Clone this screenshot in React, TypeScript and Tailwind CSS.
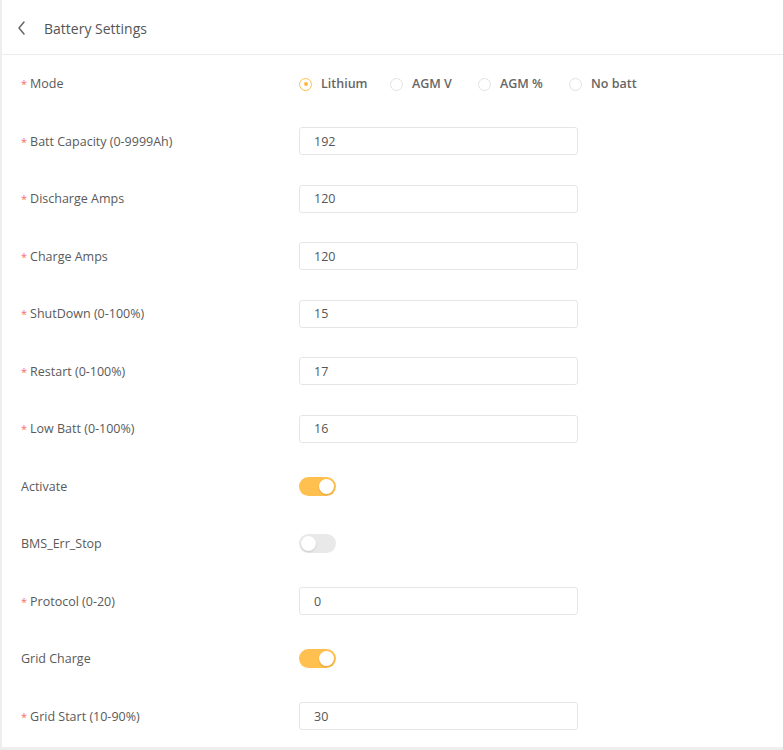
import { useState } from "react";

type Row =
  | { kind: "mode"; label: string; required: boolean }
  | { kind: "input"; label: string; required: boolean; value: string }
  | { kind: "switch"; label: string; required: boolean; on: boolean };

const ROWS: Row[] = [
  { kind: "mode", label: "Mode", required: true },
  { kind: "input", label: "Batt Capacity (0-9999Ah)", required: true, value: "192" },
  { kind: "input", label: "Discharge Amps", required: true, value: "120" },
  { kind: "input", label: "Charge Amps", required: true, value: "120" },
  { kind: "input", label: "ShutDown (0-100%)", required: true, value: "15" },
  { kind: "input", label: "Restart (0-100%)", required: true, value: "17" },
  { kind: "input", label: "Low Batt (0-100%)", required: true, value: "16" },
  { kind: "switch", label: "Activate", required: false, on: true },
  { kind: "switch", label: "BMS_Err_Stop", required: false, on: false },
  { kind: "input", label: "Protocol (0-20)", required: true, value: "0" },
  { kind: "switch", label: "Grid Charge", required: false, on: true },
  { kind: "input", label: "Grid Start (10-90%)", required: true, value: "30" },
];

const MODES = [
  { key: "lithium", label: "Lithium", w: "w-[91px]" },
  { key: "agmv", label: "AGM V", w: "w-[88px]" },
  { key: "agmp", label: "AGM %", w: "w-[91px]" },
  { key: "none", label: "No batt", w: "" },
];

function Toggle({ initial }: { initial: boolean }) {
  const [on, setOn] = useState(initial);
  return (
    <button
      onClick={() => setOn(!on)}
      className={`flex h-[19px] w-[37px] items-center rounded-full p-[2px] ${
        on ? "justify-end bg-[#ffc04f]" : "justify-start bg-[#e9e9e9]"
      }`}
    >
      <span className="h-[15px] w-[15px] rounded-full bg-white shadow-[0_1px_2px_rgba(0,0,0,0.15)]" />
    </button>
  );
}

export default function App() {
  const [mode, setMode] = useState("lithium");

  return (
    <div
      className="min-h-[750px] bg-[#eeeeee] pl-[2px]"
      style={{ fontFamily: '"Open Sans", "Noto Sans", Arial, sans-serif' }}
    >
      <div className="bg-white pb-[2px]">
        {/* Header */}
        <div className="flex h-[55px] items-center border-b border-[#ececec] pl-[14px] pt-[2px]">
          <svg width="12" height="16" viewBox="0 0 12 16" className="text-[#666]">
            <path d="M8 2 L3 8 L8 14" fill="none" stroke="currentColor" strokeWidth="1.5" strokeLinecap="round" strokeLinejoin="round" />
          </svg>
          <span className="ml-[16px] text-[14px] text-[#555]">Battery Settings</span>
        </div>

        {/* Form */}
        <div>
          {ROWS.map((row) => (
            <div key={row.label} className="flex h-[57.5px] items-center">
              <div className="w-[297px] pl-[19px] pt-[2px] text-[12.5px] text-[#5a5a5a]">
                {row.required && <span className="mr-[3px] text-[11px] text-[#f56c6c]">*</span>}
                {row.label}
              </div>
              {row.kind === "mode" && (
                <div className="flex items-center pt-[1px]">
                  {MODES.map((m) => {
                    const active = mode === m.key;
                    return (
                      <label
                        key={m.key}
                        onClick={() => setMode(m.key)}
                        className={`flex cursor-pointer items-center ${m.w}`}
                      >
                        <span
                          className={`flex h-[13px] w-[13px] items-center justify-center rounded-full border ${
                            active ? "border-[#ffc04f]" : "border-[#e2e2e2]"
                          }`}
                        >
                          {active && <span className="h-[4px] w-[4px] rounded-full bg-[#ffb73d]" />}
                        </span>
                        <span className="ml-[9px] text-[12.5px] font-semibold text-[#666]">{m.label}</span>
                      </label>
                    );
                  })}
                </div>
              )}
              {row.kind === "input" && (
                <input
                  defaultValue={row.value}
                  className="h-[28px] w-[279px] rounded-[3px] border border-[#e6e6e6] px-[14px] text-[12.5px] text-[#555] outline-none"
                />
              )}
              {row.kind === "switch" && <Toggle initial={row.on} />}
            </div>
          ))}
        </div>
      </div>
    </div>
  );
}
